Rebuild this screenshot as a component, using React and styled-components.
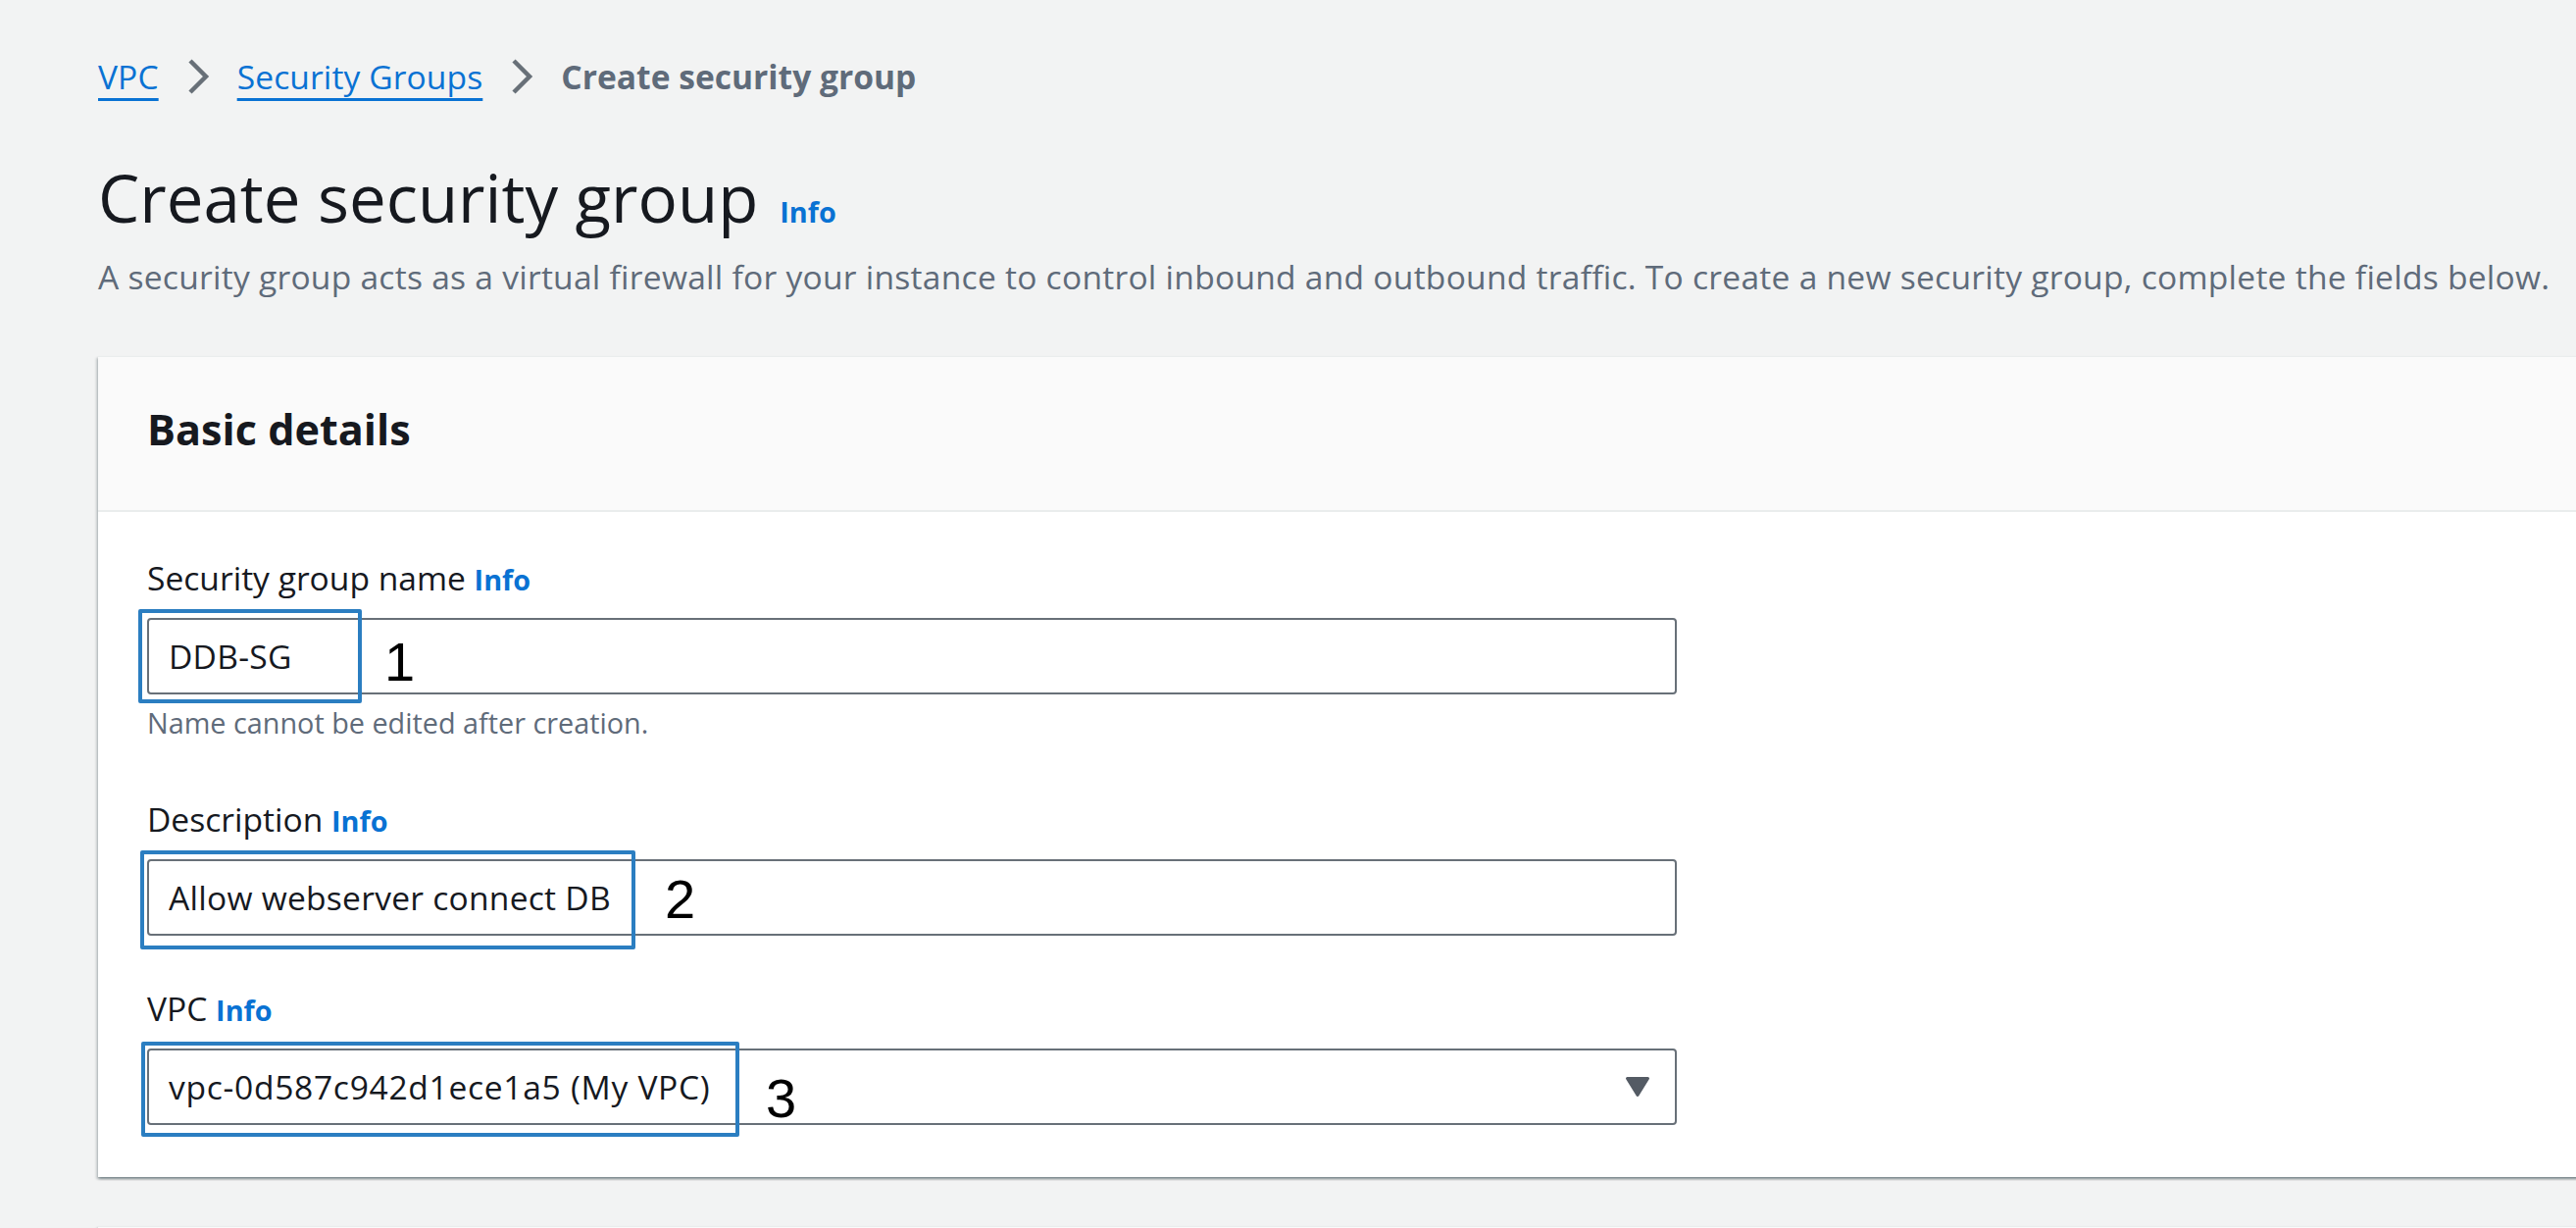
import React from "react";
import styled, { createGlobalStyle } from "styled-components";

const GlobalStyle = createGlobalStyle`
  html, body {
    margin: 0;
    padding: 0;
    overflow: hidden;
    background: #f2f3f3;
  }
  body {
    font-family: "Open Sans", "Helvetica Neue", Roboto, Arial, sans-serif;
    color: #16191f;
  }
  * {
    box-sizing: border-box;
  }
`;

const Page = styled.main`
  padding: 54px 0 0 100px;
  min-height: 100vh;
`;

const Breadcrumbs = styled.nav`
  display: flex;
  align-items: center;
  gap: 28px;
  height: 48px;
  font-size: 33.6px;
  line-height: 48px;
`;

const Crumb = styled.a`
  color: #0972d3;
  text-decoration: underline;
  text-decoration-thickness: 2.6px;
  text-underline-offset: 9px;
  letter-spacing: 0.1px;
  cursor: pointer;
`;

const CurrentCrumb = styled.span`
  color: #5f6b7a;
  font-weight: 700;
`;

const TitleRow = styled.div`
  display: flex;
  align-items: baseline;
  gap: 22px;
  margin-top: 57px;
`;

const Title = styled.h1`
  margin: 0;
  font-size: 67.2px;
  line-height: 84px;
  font-weight: 400;
  color: #16191f;
`;

const InfoLink = styled.a`
  font-size: 28.8px;
  font-weight: 700;
  color: #0972d3;
  text-decoration: none;
  cursor: pointer;
`;

const Lead = styled.p`
  margin: 15px 0 0;
  font-size: 33.6px;
  line-height: 48px;
  letter-spacing: 0.25px;
  color: #5f6b7a;
  white-space: nowrap;
`;

const Card = styled.section`
  margin-top: ${(props) => props.$top}px;
  width: 2600px;
  min-height: ${(props) => props.$minHeight || 0}px;
  background: #ffffff;
  box-shadow: 0 2.4px 2.4px 0 rgba(0, 28, 36, 0.3),
    2.4px 2.4px 2.4px 0 rgba(0, 28, 36, 0.15),
    -2.4px 2.4px 2.4px 0 rgba(0, 28, 36, 0.15);
  border-top: 1px solid #eaeded;
`;

const CardHeader = styled.header`
  background: #fafafa;
  border-bottom: 2px solid #eaeded;
  padding: 48px 50px 55px;
  min-height: 158px;
`;

const CardTitle = styled.h2`
  margin: 0;
  font-size: 43.2px;
  line-height: 52.8px;
  font-weight: 700;
  color: #16191f;
`;

const CardBody = styled.div`
  display: flex;
  flex-direction: column;
  padding: 43px 50px 53px;
`;

const Field = styled.div`
  display: flex;
  flex-direction: column;
  margin-top: ${(props) => props.$space || 0}px;
`;

const Label = styled.label`
  font-size: 33.6px;
  line-height: 48px;
  margin-bottom: 15px;
  color: #16191f;
`;

const Control = styled.div`
  position: relative;
  width: 1560px;
`;

const TextInput = styled.input`
  display: block;
  width: 100%;
  height: 78px;
  margin: 0;
  padding: 0 20px;
  border: 2px solid #687078;
  border-radius: 4px;
  background: #ffffff;
  font-family: "Open Sans", "Helvetica Neue", Roboto, Arial, sans-serif;
  font-size: 33.6px;
  line-height: 48px;
  letter-spacing: 0.25px;
  color: #16191f;
  outline: none;
`;

const SelectBox = styled.div`
  display: flex;
  align-items: center;
  justify-content: space-between;
  height: 78px;
  padding: 0 25px 0 20px;
  border: 2px solid #687078;
  border-radius: 4px;
  background: #ffffff;
  font-size: 33.6px;
  line-height: 48px;
  color: #16191f;
  cursor: pointer;
`;

const SelectValue = styled.span`
  letter-spacing: 0.7px;
`;

const Hint = styled.div`
  margin-top: 10px;
  font-size: 28.8px;
  line-height: 38.4px;
  color: #5f6b7a;
`;

// blue annotation frames drawn over the inputs
const Marker = styled.div`
  position: absolute;
  left: ${(props) => props.$x}px;
  top: ${(props) => props.$y}px;
  width: ${(props) => props.$w}px;
  height: ${(props) => props.$h}px;
  border: 4px solid #2b7ec1;
  border-radius: 2px;
  pointer-events: none;
`;

const MarkerNum = styled.span`
  position: absolute;
  left: ${(props) => props.$x}px;
  top: ${(props) => props.$y}px;
  font-family: "Liberation Sans", Arial, sans-serif;
  font-size: 56px;
  line-height: 1;
  color: #000000;
`;

function Chevron() {
  return (
    <svg width="24" height="38" viewBox="0 0 24 38" aria-hidden="true">
      <polyline
        points="4,3 20,19 4,35"
        fill="none"
        stroke="#687078"
        strokeWidth="4.5"
      />
    </svg>
  );
}

function CaretDown() {
  return (
    <svg width="26" height="22" viewBox="0 0 26 22" aria-hidden="true">
      <path
        d="M2.5 2.5 H23.5 L13 19.5 Z"
        fill="#545b64"
        stroke="#545b64"
        strokeWidth="3"
        strokeLinejoin="round"
      />
    </svg>
  );
}

const fields = [
  {
    id: "name",
    label: "Security group name",
    value: "DDB-SG",
    hint: "Name cannot be edited after creation.",
    space: 0,
    marker: { x: -9, y: -9, w: 228, h: 96 },
    num: { n: "1", x: 242, y: 17 },
  },
  {
    id: "desc",
    label: "Description",
    value: "Allow webserver connect DB",
    space: 55,
    marker: { x: -7, y: -9, w: 505, h: 101 },
    num: { n: "2", x: 528, y: 13 },
  },
  {
    id: "vpc",
    label: "VPC",
    value: "vpc-0d587c942d1ece1a5 (My VPC)",
    select: true,
    space: 50,
    marker: { x: -6, y: -7, w: 610, h: 97 },
    num: { n: "3", x: 631, y: 23 },
  },
];

function FormField({ item }) {
  return (
    <Field $space={item.space}>
      <Label htmlFor={item.id}>
        {item.label} <InfoLink>Info</InfoLink>
      </Label>
      <Control>
        {item.select ? (
          <SelectBox id={item.id}>
            <SelectValue>{item.value}</SelectValue>
            <CaretDown />
          </SelectBox>
        ) : (
          <TextInput id={item.id} defaultValue={item.value} readOnly />
        )}
        <Marker
          $x={item.marker.x}
          $y={item.marker.y}
          $w={item.marker.w}
          $h={item.marker.h}
        />
        <MarkerNum $x={item.num.x} $y={item.num.y}>
          {item.num.n}
        </MarkerNum>
      </Control>
      {item.hint && <Hint>{item.hint}</Hint>}
    </Field>
  );
}

export default function App() {
  return (
    <>
      <GlobalStyle />
      <Page>
        <Breadcrumbs>
          <Crumb>VPC</Crumb>
          <Chevron />
          <Crumb>Security Groups</Crumb>
          <Chevron />
          <CurrentCrumb>Create security group</CurrentCrumb>
        </Breadcrumbs>
        <TitleRow>
          <Title>Create security group</Title>
          <InfoLink>Info</InfoLink>
        </TitleRow>
        <Lead>
          A security group acts as a virtual firewall for your instance to
          control inbound and outbound traffic. To create a new security group,
          complete the fields below.
        </Lead>
        <Card $top={57}>
          <CardHeader>
            <CardTitle>Basic details</CardTitle>
          </CardHeader>
          <CardBody>
            {fields.map((item) => (
              <FormField key={item.id} item={item} />
            ))}
          </CardBody>
        </Card>
        {/* next container starts just below the fold */}
        <Card $top={50} $minHeight={400}>
          <CardHeader />
        </Card>
      </Page>
    </>
  );
}
